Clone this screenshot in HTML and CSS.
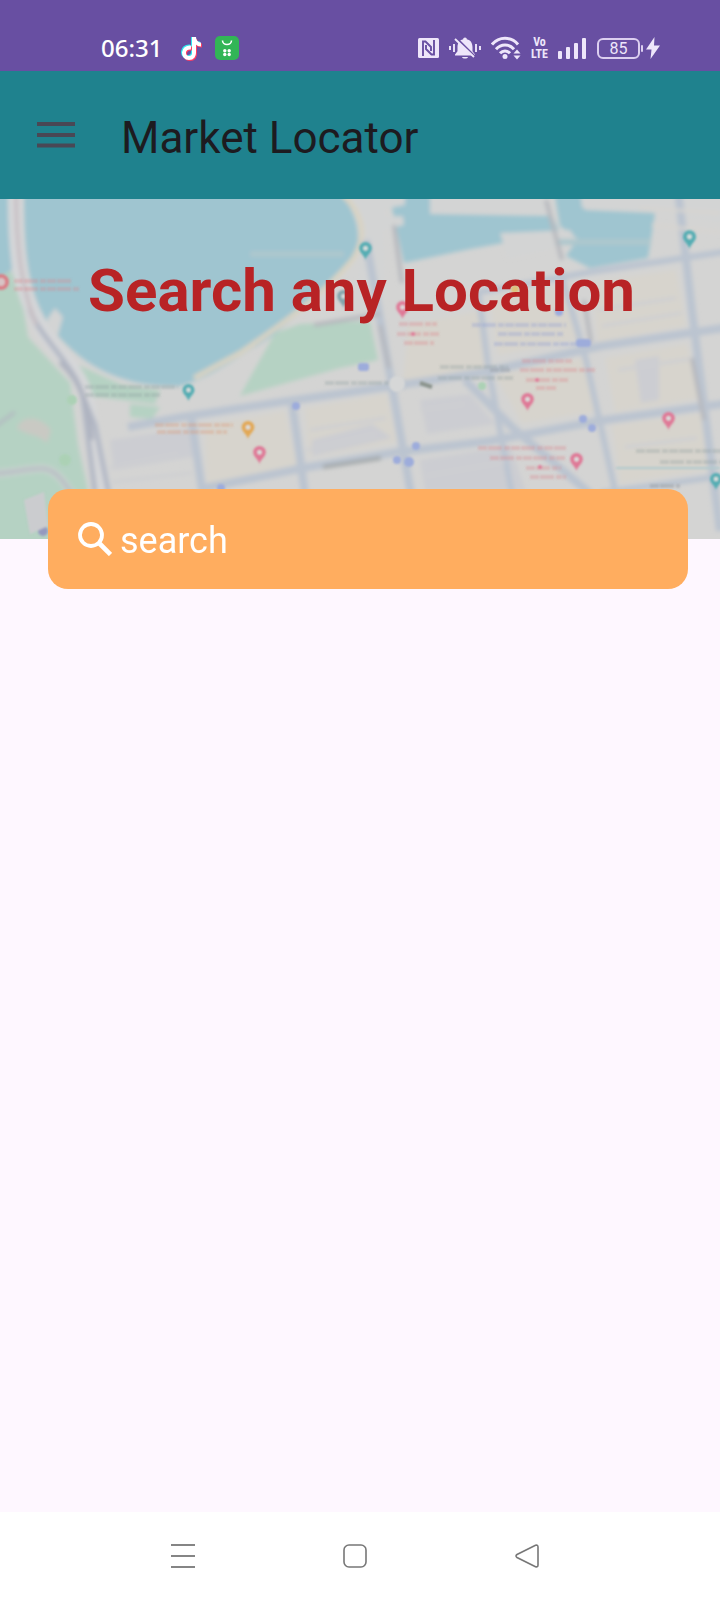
FILE: index.html
```
<!DOCTYPE html>
<html lang="en">
<head>
<meta charset="utf-8">
<meta name="viewport" content="width=device-width, initial-scale=1">
<title>Market Locator</title>
<link rel="stylesheet" href="styles.css">
</head>
<body>
<div class="screen">
  <div class="status-bar">
    <div class="status-left">
      <time class="clock">06:31</time>
      <svg class="note-icon" width="22" height="26" viewBox="0 0 22 26" aria-hidden="true">
        <g fill="none" stroke-width="4">
          <path stroke="#2ee6ee" d="M9 11.500C0 10.500 0 22 7 22c4 0 5-3 5-5V2c0 4 3 6.500 7 6.500"/>
          <path stroke="#ff3d63" d="M11 13.500C2 12.500 2 24 9 24c4 0 5-3 5-5V4c0 4 3 6.500 7 6.500"/>
          <path stroke="#fff" d="M10 12.500C1 11.500 1 23 8 23c4 0 5-3 5-5V2c0 4 3 7.500 7 7.500"/>
        </g>
      </svg>
      <svg class="market-icon" width="24" height="24" viewBox="0 0 24 24" aria-hidden="true">
        <rect width="24" height="24" rx="5" fill="#32b556"/>
        <path d="M7.500 4.500a4.500 4 0 0 0 9 0" fill="none" stroke="#fff" stroke-width="1.600"/>
        <g fill="#fff"><circle cx="9.800" cy="14.700" r="1.700"/><circle cx="14.200" cy="14.700" r="1.700"/><circle cx="9.800" cy="18.500" r="1.700"/><circle cx="14.200" cy="18.500" r="1.700"/></g>
      </svg>
    </div>
    <div class="status-right">
      <svg width="21" height="20" viewBox="0 0 21 20" aria-hidden="true">
        <rect width="21" height="20" rx="1.500" fill="#eee6fa"/>
        <path d="M5 18V3.500h2.500L13 9v4M16 2v14.500h-2.500L8 11V7" fill="none" stroke="#684fa2" stroke-width="1.900"/>
      </svg>
      <svg width="32" height="24" viewBox="0 0 32 24" aria-hidden="true">
        <path d="M16 1.500c1.200 0 1.800.8 1.800 1.800 4 .8 5.700 4 5.700 8v4l2.500 3.200V19.500H6v-1l2.500-3.200v-4c0-4 1.700-7.200 5.700-8 0-1 .6-1.800 1.800-1.800z" fill="#eee6fa"/>
        <path d="M13 21h6c-.5 2-5.500 2-6 0z" fill="#eee6fa"/>
        <path d="M8 3l19 19" stroke="#684fa2" stroke-width="2.500"/>
        <path d="M6 3l19 18M1 10v4M5 8v8M27 8v8M31 10v4" stroke="#eee6fa" stroke-width="1.900"/>
      </svg>
      <svg width="30" height="24" viewBox="0 0 30 24" aria-hidden="true">
        <g fill="none" stroke="#eee6fa" stroke-width="3"><path d="M1 8.500c7-8.200 19-8.200 26 0M5 13.200c5-5.600 13-5.600 18 0M9 17.300c3-3.200 7-3.200 10 0"/></g>
        <circle cx="14" cy="20.500" r="2.500" fill="#eee6fa"/>
        <path d="M22.500 17.500l3.500-4 3.500 4zM22.500 19.500h7l-3.500 4z" fill="#eee6fa"/>
      </svg>
      <span class="volte">Vo<br>LTE</span>
      <svg width="29" height="21" viewBox="0 0 29 21" aria-hidden="true">
        <g fill="#eee6fa"><rect x="0" y="13" width="4" height="8" rx="1"/><rect x="8" y="9" width="4" height="12" rx="1"/><rect x="16" y="5" width="4" height="16" rx="1"/><rect x="24" y="0" width="4" height="21" rx="1"/></g>
      </svg>
      <span class="power">
        <span class="battery">85</span>
        <svg width="14" height="22" viewBox="0 0 14 22" aria-hidden="true"><path d="M8.500 0L0 12.500h5.500L4.500 22 14 8.500H8z" fill="#eee6fa"/></svg>
      </span>
    </div>
  </div>

  <header class="app-bar">
    <button class="menu-button" type="button" aria-label="Open menu">
      <svg width="38" height="26" viewBox="0 0 38 26" aria-hidden="true"><path d="M0 2h38M0 13h38M0 23.500h38" stroke="#494855" stroke-width="4"/></svg>
    </button>
    <h1 class="app-title">Market Locator</h1>
  </header>

  <main class="content">
    <section class="hero">
      <svg class="map" viewBox="0 199 720 340" preserveAspectRatio="xMidYMid slice" aria-hidden="true">
        <defs>
          <filter id="soft" filterUnits="userSpaceOnUse" x="-20" y="179" width="760" height="380"><feGaussianBlur stdDeviation="2"/></filter>
          <filter id="fine" filterUnits="userSpaceOnUse" x="-20" y="179" width="760" height="380"><feGaussianBlur stdDeviation="1.200"/></filter>
          <symbol id="pin" viewBox="0 0 14 20" overflow="visible"><path d="M7 20C6 15 0 12 0 7a7 7 0 0 1 14 0c0 5-6 8-7 13z"/><circle cx="7" cy="7" r="2.600" fill="#dbe0df"/></symbol>
        </defs>
        <rect y="199" width="720" height="340" fill="#d4d4d3"/>
        <g filter="url(#soft)">
          <path fill="#d7d4cd" d="M205 425l80-14 14 60-92 16zM305 408l82-14 10 48-88 15zM408 325l72-14 8 60-85 12zM495 375l92-18 10 54-75 12zM605 358l82-14 14 54-86 14zM612 425l92-12 8 56-92 14zM592 282l84-12 10 56-88 16zM490 298l82-14 8 55-82 16z"/>
          <path fill="#cccdd2" d="M312 440l60-16 20 14-80 18zM635 360l24-4v44l-18 3zM420 400l50-6 25 30-68 10zM110 440l80-12 8 28-84 14zM420 460l90-14 16 45H425z"/>
          <path fill="#b5d2c3" d="M-10 265l28 10 10 62 42 46 8 62 10 45-36 60H-10z"/>
          <path fill="#b5d2c3" d="M275 333l25-9 70-3 8 39-38 8-100 28 12-22zM72 362l50 23 38 5-5 14-65-8zM130 404l30 3-8 12-22-2z"/>
          <path fill="#c9c9c3" d="M17 428c5-14 24-12 34 2l-4 13c-10-10-20-7-30-15z"/>
          <path fill="#9fc5d0" d="M-10 190h18l4 80-22 12zM24 190c0 64 4 102 24 133 30 42 75 65 131 63 26-5 53-25 92-49l33-28c24-20 52-48 54-68 1-20-7-33-18-51z"/>
          <path fill="#9fc5d0" d="M388 190h42v24l122 2 8 17-90 16-66 14-8-37zM554 190h27l4 20 70 3-7 45-58 10-24-12 12-17-18-13z"/>
          <g fill="#d3d4d4"><path d="M338 190h67v15l-22 4 2 8 18-1 1 9-21 5 2 70-27-12 4-50-4-20z"/><path d="M430 190h119v22l-119 1zM580 190h150v34l-82-13-66-3z"/><path d="M48 318l7-10 8 9-5 18-12-5zM500 233l70-3 8 13-70 15z"/></g>
          <path d="M343 195c25 24 21 47 10 64-28 34-70 65-113 94l-46 25" fill="none" stroke="#d9d3c2" stroke-width="5"/>
          <path d="M250 254h94M555 242h96" stroke="#adc7cd" stroke-width="6"/>

          <g fill="none" stroke="#d6d7d9" stroke-width="14">
            <path d="M15 190c-1 79 8 117 36 152 23 28 35 38 39 75l16 80"/>
            <path d="M-10 474c46-3 55-14 72 6l24 33" stroke-width="7"/>
          </g>
          <g fill="none" stroke="#bbc4d0" stroke-width="8">
            <path d="M128 427l54-10 92-14 126-18 85-13 116-26 129-19M205 488l98-20 95-16 92-11 108-20 132-18"/>
            <path d="M366 240l24 135 22 125M292 402l13 92M191 416l12 80M678 190l14 121 28 220"/>
            <path d="M560 270l26 90 30 135M478 290l10 76 24 128" stroke-width="6"/>
            <path d="M465 380l47 47 82 70"/>
            <path d="M480 292l110-20 140-21M600 493l130-18" stroke-width="6"/>
            <path d="M30 308c5 25 48 60 53 90l12 94M75 377l20 48 14 70" stroke="#b2b8c5" stroke-width="5"/>
            <path d="M16 190c0 59 6 99 20 135" stroke="#c8c0c4" stroke-width="4"/>
            <path d="M60 362c25 24 29 50 32 78" stroke="#aeb2bf" stroke-width="4"/>
            <path d="M-10 474c46-3 55-14 72 6l12 16M-4 426l19-14" stroke="#b4bdc1" stroke-width="4"/>
          </g>
          <g fill="none" stroke="#b6b8bd" stroke-width="4">
            <path d="M546 200l16 60M584 300l7 42M692 358l12 62M380 325l9 43M394 225l8 58M314 325l66-11"/>
            <path d="M323 467l58-9" stroke="#a3a8aa"/>
            <path d="M110 468l68-14M112 482l80-9M306 450l70-16M310 430l76-12M425 476l80-14M618 370l72-11M625 447l72-9M598 310l78-12M602 326l80-13M420 410l45-6" stroke="#cecfd2" stroke-width="3"/>
            <path d="M652 225l68 7M640 208l80 5" stroke="#d7d4d0" stroke-width="3"/>
          </g>
        </g>
        <g filter="url(#fine)">
          <g fill="none" stroke-width="4" stroke-dasharray="9 1 14 2 6 1" opacity=".32">
            <path stroke="#8e9f9e" d="M85 387h93M85 395h75M325 383h65M440 367h68M438 378h76M636 451h94M660 462h70"/>
            <path stroke="#dc858d" d="M14 281h58M14 289h66M399 324h38M397 334h42M404 343h30M522 361h50M520 370h76M526 380h42M536 388h20M478 448h88M490 458h75M526 468h35M530 477h36"/>
            <path stroke="#dc9573" d="M155 425h78M157 432h70"/>
            <path stroke="#8b9cd4" d="M472 325h94M498 334h66M494 344h82"/>
            <path stroke="#858d8e" d="M650 486h30M490 370h20"/>
          </g>
          <path d="M616 468h104" stroke="#b2cacd" stroke-width="2"/>
          <g fill="#df7896"><use href="#pin" x="396" y="301" width="13" height="18"/><use href="#pin" x="521" y="393" width="13" height="18"/><use href="#pin" x="662" y="412" width="13" height="18"/><use href="#pin" x="570" y="453" width="13" height="18"/><use href="#pin" x="253" y="446" width="13" height="18"/><circle cx="413" cy="334" r="2"/><circle cx="537" cy="380" r="2"/><circle cx="540" cy="467" r="2"/></g>
          <g fill="#55adb3"><use href="#pin" x="359" y="242" width="13" height="18"/><use href="#pin" x="683" y="230" width="13" height="19"/><use href="#pin" x="182" y="384" width="13" height="17"/><use href="#pin" x="710" y="473" width="12" height="17"/></g>
          <use href="#pin" x="337" y="290" width="13" height="18" fill="#82a4ab"/>
          <use href="#pin" x="241" y="421" width="14" height="18" fill="#e2a855"/>
          <circle cx="1" cy="282" r="6" fill="#d8c4c6" stroke="#d98088" stroke-width="4"/>
          <circle cx="515" cy="289" r="4" fill="#dfc07a"/>
          <g fill="#9dacdb"><rect x="358" y="363" width="11" height="8" rx="3"/><circle cx="296" cy="406" r="4"/><rect x="576" y="339" width="15" height="8" rx="3"/><circle cx="559" cy="312" r="4"/><circle cx="583" cy="419" r="4"/><circle cx="592" cy="428" r="4"/><circle cx="416" cy="446" r="4"/><circle cx="397" cy="460" r="4"/><circle cx="409" cy="462" r="5"/><circle cx="43" cy="531" r="5" fill="#9599bf"/><circle cx="221" cy="488" r="4"/></g>
          <circle cx="397" cy="384" r="8" fill="#d6d7d7"/><path d="M420 383l12 4" stroke="#8c948e" stroke-width="4"/>
          <g fill="#acd1b5"><circle cx="482" cy="386" r="4"/><circle cx="65" cy="460" r="6"/><circle cx="72" cy="400" r="5"/></g>
          <path d="M24 500l20-8 4 34-18 8z" fill="#cbcccf"/>
        </g>
      </svg>
      <h2 class="hero-title">Search any Location</h2>
    </section>
    <form class="search-card" role="search">
      <label class="search-label" for="search" aria-label="Search location">
        <svg width="34" height="34" viewBox="0 0 34 34" aria-hidden="true"><circle cx="13" cy="13" r="11" fill="none" stroke="#fff" stroke-width="3.800"/><path d="M21 21l11.500 11.500" stroke="#fff" stroke-width="4.600"/></svg>
      </label>
      <input class="search-input" id="search" type="text" placeholder="search">
    </form>
  </main>

  <nav class="system-nav" aria-label="System navigation">
    <button type="button" aria-label="Recent apps"><svg width="24" height="24" viewBox="0 0 24 24"><path d="M0 1h24M0 12h24M0 23h24" stroke="#858585" stroke-width="2"/></svg></button>
    <button type="button" aria-label="Home"><svg width="24" height="24" viewBox="0 0 24 24"><rect x="1" y="1" width="22" height="22" rx="5" fill="none" stroke="#777" stroke-width="1.600"/></svg></button>
    <button type="button" aria-label="Back"><svg width="24" height="24" viewBox="0 0 24 24"><path d="M2 10.500L20.500 1.300Q23 .5 23 3v18q0 2.500-2.500 1.700L2 13.500q-2-1.500 0-3z" fill="none" stroke="#777" stroke-width="1.600"/></svg></button>
  </nav>
</div>
</body>
</html>
```
FILE: styles.css
```
* {
  box-sizing: border-box;
}

body {
  margin: 0;
  font-family: Roboto, "Liberation Sans", sans-serif;
  background: #fef7ff;
}

button {
  padding: 0;
  border: 0;
  background: none;
}

svg {
  display: block;
  flex: none;
}

.screen {
  display: flex;
  flex-direction: column;
  min-height: 100vh;
}

.status-bar {
  display: flex;
  justify-content: space-between;
  height: 71px;
  padding: 24px 60px 0 101px;
  background: #684fa2;
  color: #eee6fa;
}

.status-left,
.status-right {
  display: flex;
  align-items: center;
  height: 48px;
}

.status-right {
  gap: 10px;
}

.clock {
  margin-right: 19px;
  color: #fff;
  font-family: "Noto Sans", sans-serif;
  font-size: 24px;
  font-weight: 500;
  line-height: 28px;
}

.market-icon {
  margin-left: 12px;
}

.volte {
  width: 17px;
  font-family: "Roboto Condensed", "Open Sans Condensed", "Liberation Sans", sans-serif;
  font-size: 12px;
  font-weight: 700;
  line-height: 12px;
  text-align: center;
}

.power {
  display: flex;
  align-items: center;
  gap: 6px;
}

.battery {
  position: relative;
  width: 43px;
  height: 21px;
  border: 2px solid #dccff0;
  border-radius: 6px;
  font-size: 16px;
  line-height: 18px;
  text-align: center;
}

.battery::after {
  content: "";
  position: absolute;
  top: 5px;
  right: -5px;
  width: 2px;
  height: 7px;
  border-radius: 1px;
  background: #dccff0;
}

.app-bar {
  display: flex;
  align-items: center;
  gap: 46px;
  height: 128px;
  padding: 0 37px;
  background: #1f828e;
}

.app-title {
  margin: 0;
  padding-top: 6px;
  color: #1d1b20;
  font-size: 44px;
  font-weight: 400;
  line-height: 52px;
}

.content {
  flex: 1;
}

.hero {
  display: grid;
  height: 340px;
  overflow: hidden;
}

.map,
.hero-title {
  grid-area: 1 / 1;
}

.map {
  width: 100%;
  height: 340px;
}

.hero-title {
  z-index: 1;
  margin: 0;
  padding: 57px 0 0 3px;
  color: #b82325;
  font-size: 60px;
  font-weight: 700;
  line-height: 70px;
  text-align: center;
}

.search-card {
  position: relative;
  z-index: 2;
  display: flex;
  align-items: center;
  gap: 8px;
  height: 100px;
  margin: -50px 32px 0 48px;
  padding: 0 30px;
  border-radius: 20px;
  background: #ffad5f;
}

.search-input {
  flex: 1;
  min-width: 0;
  height: 60px;
  padding: 4px 0 0;
  border: 0;
  outline: 0;
  background: transparent;
  color: #fff;
  font-family: inherit;
  font-size: 36px;
}

.search-input::placeholder {
  color: #fff;
  opacity: 1;
}

.system-nav {
  display: flex;
  justify-content: space-between;
  align-items: center;
  height: 88px;
  padding: 0 181px 0 171px;
  background: #fff;
}
```
